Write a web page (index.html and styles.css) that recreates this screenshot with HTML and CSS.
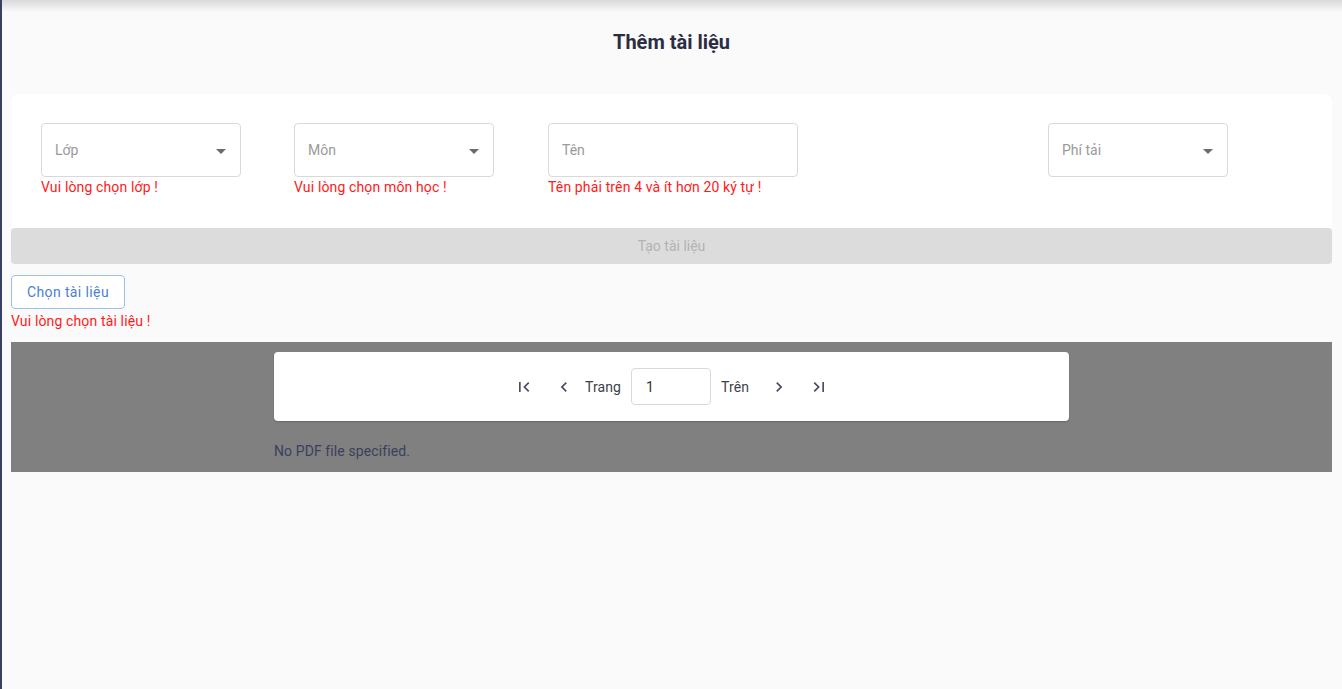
FILE: index.html
```html
<!DOCTYPE html>
<html lang="vi">
<head>
<meta charset="utf-8">
<title>Thêm tài liệu</title>
<link rel="stylesheet" href="styles.css">
</head>
<body>
<div class="page">
  <div class="topshadow"></div>
  <h1 class="title">Thêm tài liệu</h1>
  <div class="card">
    <div class="fields">
      <div class="field">
        <div class="box w200"><span class="ph">Lớp</span><span class="caret"></span></div>
        <div class="err">Vui lòng chọn lớp !</div>
      </div>
      <div class="field">
        <div class="box w200"><span class="ph">Môn</span><span class="caret"></span></div>
        <div class="err">Vui lòng chọn môn học !</div>
      </div>
      <div class="field">
        <div class="box w250"><span class="ph">Tên</span></div>
        <div class="err">Tên phải trên 4 và ít hơn 20 ký tự !</div>
      </div>
      <div class="field">
        <div class="box w180"><span class="ph">Phí tải</span><span class="caret"></span></div>
      </div>
    </div>
  </div>
  <button class="create" disabled>Tạo tài liệu</button>
  <div class="choose">
    <button class="pick">Chọn tài liệu</button>
    <div class="err">Vui lòng chọn tài liệu !</div>
  </div>
  <div class="viewer">
    <div class="toolbar">
      <svg class="ic" viewBox="0 0 24 24"><path d="M18.41 16.59L13.82 12l4.59-4.59L17 6l-6 6 6 6zM6 6h2v12H6z"/></svg>
      <svg class="ic" viewBox="0 0 24 24"><path d="M15.41 7.41L14 6l-6 6 6 6 1.41-1.41L10.83 12z"/></svg>
      <span class="lbl">Trang</span>
      <div class="pageinput">1</div>
      <span class="lbl">Trên</span>
      <svg class="ic" viewBox="0 0 24 24"><path d="M10 6L8.59 7.41 13.17 12l-4.58 4.59L10 18l6-6z"/></svg>
      <svg class="ic" viewBox="0 0 24 24"><path d="M5.59 7.41L10.18 12l-4.59 4.59L7 18l6-6-6-6zM16 6h2v12h-2z"/></svg>
    </div>
    <div class="nopdf">No PDF file specified.</div>
  </div>
</div>
</body>
</html>
```
FILE: styles.css
```css
* { box-sizing: border-box; }
html, body { margin: 0; padding: 0; }
body {
  font-family: Roboto, "Liberation Sans", Arial, sans-serif;
  background: #fafafa;
  width: 1342px;
  height: 689px;
  overflow: hidden;
}
.page {
  position: relative;
  height: 689px;
  border-left: 2px solid #3b4166;
  padding: 0 10px 0 9px;
}
.topshadow {
  position: absolute;
  left: 0; right: 0; top: 0;
  height: 12px;
  background: linear-gradient(#d9d9d9, rgba(250,250,250,0));
}
.title {
  margin: 0;
  padding-top: 30px;
  height: 94px;
  text-align: center;
  font-size: 20px;
  font-weight: 700;
  color: #2b2d42;
  line-height: 24px;
}
.card {
  background: #fff;
  border-radius: 8px 8px 0 0;
  padding: 29px 30px 0 30px;
  height: 134px;
}
.fields {
  display: grid;
  grid-template-columns: 253px 254px 500px 180px;
}
.box {
  height: 54px;
  border: 1px solid #d9d9d9;
  border-radius: 4px;
  display: flex;
  align-items: center;
  justify-content: space-between;
  padding: 0 14px 0 13px;
  background: #fff;
}
.w200 { width: 200px; }
.w250 { width: 250px; }
.w180 { width: 180px; }
.ph { color: #9a9a9a; font-size: 14px; margin-top: -1px; }
.caret {
  width: 0; height: 0;
  border-left: 5px solid transparent;
  border-right: 5px solid transparent;
  border-top: 5px solid #6b6b6b;
  margin-top: 2px;
}
.err {
  color: #ff1a1a;
  font-size: 14px;
  line-height: 18px;
  margin-top: 1px;
  letter-spacing: 0.14px;
}
.create {
  display: block;
  width: 100%;
  height: 36px;
  border: none;
  border-radius: 4px;
  background: #dcdcdc;
  color: #b3b3b3;
  font-family: inherit;
  font-size: 14px;
}
.choose {
  padding-top: 11px;
  height: 78px;
}
.pick {
  height: 34px;
  padding: 0 15px;
  background: #fff;
  border: 1px solid #9cc0ec;
  border-radius: 4px;
  color: #4a7fd0;
  font-family: inherit;
  font-size: 14px;
  letter-spacing: 0.38px;
}
.choose .err { margin-top: 3px; }
.viewer {
  background: #808080;
  height: 130px;
  padding: 10px 263px 0;
}
.toolbar {
  background: #fff;
  height: 69px;
  border-radius: 4px;
  display: flex;
  align-items: center;
  justify-content: center;
  padding-left: 0;
  box-shadow: 0 1px 2px rgba(0,0,0,0.2);
}
.ic { width: 20px; height: 20px; fill: #4a4d5e; margin: 0 10px; }
.lbl { font-size: 14px; color: #3d3f4a; margin: 0 10px 0 1px; letter-spacing: 0.1px; }
.toolbar .lbl:nth-of-type(2) { margin: 0 10px 0 10px; }
.pageinput {
  width: 80px;
  height: 37px;
  border: 1px solid #d9d9d9;
  border-radius: 4px;
  display: flex;
  align-items: center;
  padding-left: 14px;
  font-size: 14px;
  color: #333;
}
.nopdf {
  margin-top: 22px;
  font-size: 14px;
  color: #3b3f5c;
  letter-spacing: 0.1px;
}
```
